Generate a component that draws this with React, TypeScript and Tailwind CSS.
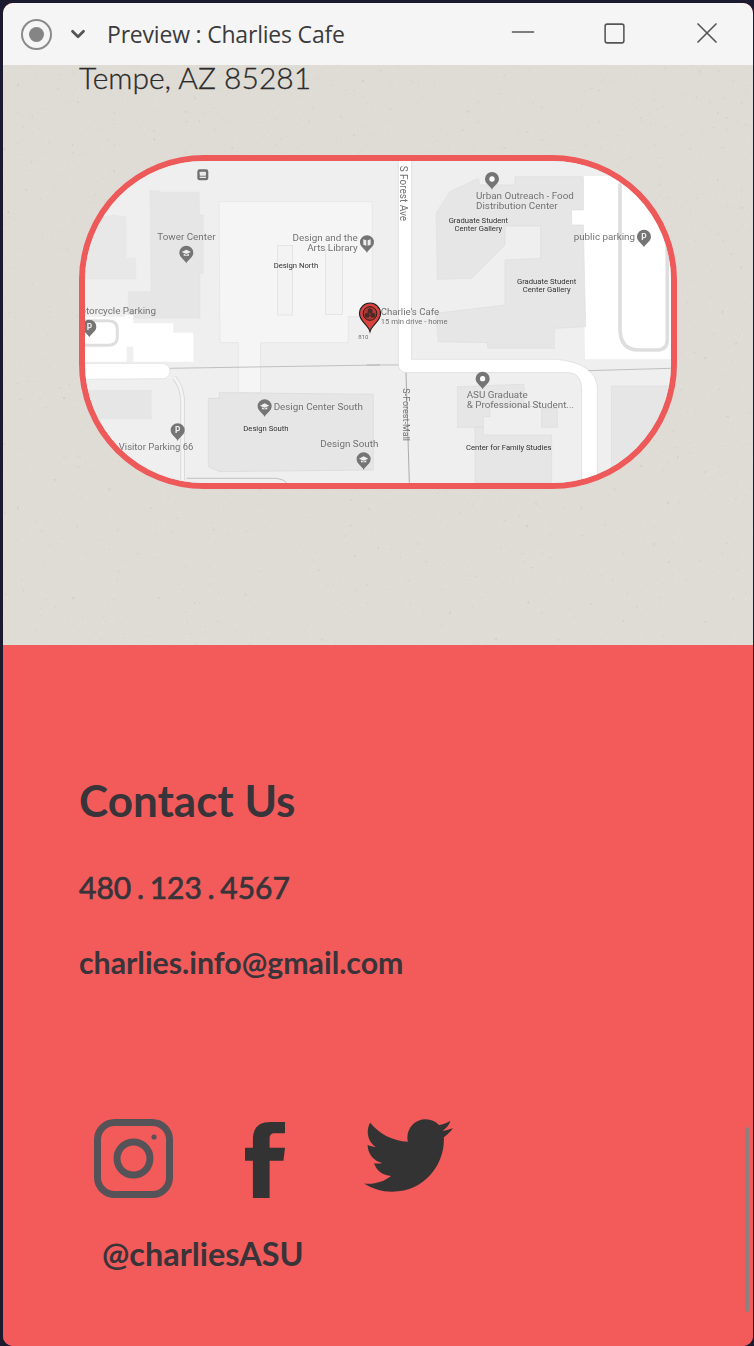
import React from "react";
import { FaTwitter } from "react-icons/fa";
import { Minus, Square, X, ChevronDown } from "lucide-react";

// map coordinates are in 3x units, so two groups share a scale
function Pin({ x, y, kind }: { x: number; y: number; kind: "dot" | "P" | "cap" | "book" }) {
  return (
    <g transform={`translate(${x} ${y})`}>
      <path d="M0 31C-4 20 -21 14 -21 -1A21 21 0 1 1 21 -1C21 14 4 20 0 31Z" fill="#757575" />
      {kind === "dot" && <circle cx="0" cy="-1" r="8" fill="#fff" />}
      {kind === "P" && (
        <text x="0" y="8" textAnchor="middle" fontSize="25" fontWeight="700" fill="#eee" fontFamily="Roboto, sans-serif">
          P
        </text>
      )}
      {kind === "cap" && <path d="M-14 -3L0 -10L14 -3L0 3ZM-8 2V8H8V2L0 6Z" fill="#eee" />}
      {kind === "book" && <path d="M-11 -10L-2 -7V9L-11 6ZM2 -7L11 -10V6L2 9Z" fill="#eee" />}
    </g>
  );
}

function Label({ x, y, size = 29.5, dark, anchor, children }: { x: number; y: number; size?: number; dark?: boolean; anchor?: "middle" | "end"; children: string }) {
  return (
    <text x={x} y={y} fontSize={size} fill={dark ? "#333" : "#737373"} textAnchor={anchor} fontFamily="Roboto, sans-serif">
      {children}
    </text>
  );
}

function CampusMap() {
  return (
    <svg viewBox="85 161 586 322" className="block w-full h-full blur-[0.4px]">
      <rect x="85" y="161" width="586" height="322" fill="#efefef" />
      {/* left half */}
      <g transform="translate(70 150) scale(0.3333)">
        <path d="M45 215L130 195L168 200V325H197V387H45Z" fill="#e8e8e8" stroke="#e0e0e0" />
        <path d="M240 122H268V127H388V195H400V370H390V505H175V425H243Z" fill="#e6e6e6" stroke="#dedede" />
        <path d="M447 155H907V500H835V578H572V728H505V578H450Z" fill="#f5f5f5" stroke="#e2e2e2" strokeWidth="2" />
        <rect x="622" y="287" width="46" height="208" fill="#f3f3f3" stroke="#dcdcdc" strokeWidth="2" />
        <rect x="767" y="300" width="50" height="193" fill="#f3f3f3" stroke="#dcdcdc" strokeWidth="2" />
        <path d="M45 500H165V495H190V520H310V548H370V635H190V590H170V635H45Z" fill="#fff" />
        <path d="M45 512H115Q142 512 142 538V562Q142 586 115 586H45" fill="#fff" stroke="#dedede" strokeWidth="9" />
        <path d="M45 640H280Q300 645 300 665Q295 690 270 686L45 688Z" fill="#fff" stroke="#dcdcdc" strokeWidth="2" />
        <path d="M300 655L930 645" stroke="#a8a8a8" strokeWidth="2" fill="none" />
        <path d="M312 682Q338 710 338 760V990" stroke="#d6d6d6" strokeWidth="14" fill="none" />
        <path d="M312 682Q338 710 338 760V990" stroke="#f4f4f4" strokeWidth="9" fill="none" />
        <rect x="45" y="720" width="200" height="88" fill="#e6e6e6" />
        <path d="M415 745H448V728L910 733V960L450 965L415 950Z" fill="#e6e6e6" stroke="#d8d8d8" strokeWidth="2" />
        <path d="M350 985H620Q640 988 650 998" stroke="#aaa" strokeWidth="2" fill="none" />
        <rect x="382" y="58" width="33" height="33" rx="7" fill="#707070" />
        <rect x="389" y="65" width="19" height="12" rx="2" fill="#e8e8e8" />
        <rect x="389" y="80" width="19" height="4" fill="#e8e8e8" />
        <Label x={262} y={270}>Tower Center</Label>
        <Pin x={349} y={309} kind="cap" />
        <Label x={863} y={272} anchor="end">Design and the</Label>
        <Label x={863} y={302} anchor="end">Arts Library</Label>
        <Pin x={891} y={278} kind="book" />
        <Label x={611} y={353} size={23} dark>Design North</Label>
        <Label x={258} y={493} anchor="end">Motorcycle Parking</Label>
        <Pin x={58} y={531} kind="P" />
        <Pin x={323} y={842} kind="P" />
        <Label x={370} y={900} anchor="end" size={28.5}>Visitor Parking 66</Label>
        <Pin x={584} y={770} kind="cap" />
        <Label x={611} y={780}>Design Center South</Label>
        <Label x={520} y={843} size={23} dark>Design South</Label>
        <Label x={925} y={891} anchor="end">Design South</Label>
        <Pin x={881} y={929} kind="cap" />
        <Label x={865} y={566} size={18}>810</Label>
      </g>
      {/* right half */}
      <g transform="translate(370 150) scale(0.3333)">
        <path d="M640 78H930V628H645L640 225H605V180H640Z" fill="#fff" />
        <path d="M750 100V535Q750 600 805 600H860Q892 600 892 570V280" fill="none" stroke="#dedede" strokeWidth="11" />
        <path d="M85 30V640Q85 668 112 668H600Q635 672 635 720V998H682V710Q675 640 560 628H125V30Z" fill="#fff" stroke="#d8d8d8" strokeWidth="2" />
        <path d="M198 190L240 125L325 85L330 105H435V80H640V180H605V225H640L647 530L553 535V595H353V578L205 575L198 490L405 465V330L512 325V228H405V285L305 385L202 388L200 250Z" fill="#e6e6e6" stroke="#dedede" strokeWidth="2" />
        <path d="M262 710L462 703V770H515V775H562V832H515V770H360V800H340V832H262Z" fill="#e6e6e6" stroke="#dddddd" strokeWidth="2" />
        <path d="M315 832H340V855H545V998H315Z" fill="#e6e6e6" stroke="#dddddd" strokeWidth="2" />
        <rect x="725" y="708" width="180" height="290" fill="#e6e6e6" stroke="#dddddd" strokeWidth="2" />
        <path d="M108 668L118 998" stroke="#888" strokeWidth="2" fill="none" />
        <path d="M655 662L905 655" stroke="#a8a8a8" strokeWidth="2" fill="none" />
        <path d="M-10 645H85" stroke="#a8a8a8" strokeWidth="2" fill="none" />
        <text transform="translate(90 47) rotate(90)" fontSize="30" fill="#737373" fontFamily="Roboto, sans-serif">S Forest Ave</text>
        <text transform="translate(100 715) rotate(90)" fontSize="27" fill="#737373" fontFamily="Roboto, sans-serif">S-Forest-Mall</text>
        <Pin x={366} y={88} kind="dot" />
        <Label x={318} y={146}>Urban Outreach - Food</Label>
        <Label x={318} y={176}>Distribution Center</Label>
        <Label x={325} y={218} size={23} dark anchor="middle">Graduate Student</Label>
        <Label x={325} y={242} size={23} dark anchor="middle">Center Gallery</Label>
        <Label x={530} y={402} size={23} dark anchor="middle">Graduate Student</Label>
        <Label x={530} y={426} size={23} dark anchor="middle">Center Gallery</Label>
        <Label x={611} y={270}>public parking</Label>
        <Pin x={822} y={261} kind="P" />
        <Label x={32} y={496} size={29}>Charlie's Cafe</Label>
        <Label x={32} y={523} size={23}>15 min drive - home</Label>
        <Pin x={338} y={687} kind="dot" />
        <Label x={290} y={744}>ASU Graduate</Label>
        <Label x={290} y={774}>&amp; Professional Student...</Label>
        <Label x={288} y={899} size={23} dark>Center for Family Studies</Label>
      </g>
      {/* cafe marker */}
      <g transform="translate(370 316.5)">
        <path d="M0 15C-2 8 -10.5 5 -10.5 -3A10.5 10.5 0 1 1 10.5 -3C10.5 5 2 8 0 15Z" fill="#d9433f" stroke="#222" strokeWidth="1.2" />
        <circle cx="0" cy="-3" r="6.8" fill="#b23a36" stroke="#2a1a18" strokeWidth="1" />
        <circle cx="0" cy="-5.6" r="2.5" fill="#4a2a25" />
        <circle cx="-2.8" cy="-1.2" r="2.5" fill="#4a2a25" />
        <circle cx="2.8" cy="-1.2" r="2.5" fill="#4a2a25" />
      </g>
    </svg>
  );
}

export default function App() {
  return (
    <div className="w-[754px] h-[1346px] bg-[#1c1a2e] pl-[3px] pt-[3px] pr-[1px] font-['Lato',sans-serif] overflow-hidden">
      <div className="w-full h-[1343px] rounded-[10px] overflow-hidden flex flex-col relative bg-[#f35b5b]">
        {/* title bar */}
        <div className="h-[62px] shrink-0 bg-[#f5f5f6] flex items-center text-[#3c3c3c]">
          <div className="ml-[18px] w-[31px] h-[31px] rounded-full border-2 border-[#8a8a8a] flex items-center justify-center">
            <div className="w-[15px] h-[15px] rounded-full bg-[#858585]" />
          </div>
          <ChevronDown className="ml-[15px] w-[22px] h-[22px]" strokeWidth={3} color="#555" />
          <span className="ml-[18px] text-[23px] font-['Open_Sans',sans-serif] tracking-[-0.2px]">Preview : Charlies Cafe</span>
          <Minus className="absolute left-[502px] top-[11px] w-[36px] h-[36px]" strokeWidth={1.1} color="#555" />
          <Square className="absolute left-[599px] top-[18px] w-[25px] h-[25px]" strokeWidth={1.5} color="#555" />
          <X className="absolute left-[686px] top-[12px] w-[36px] h-[36px]" strokeWidth={1.1} color="#555" />
        </div>

        {/* paper section */}
        <div className="h-[580px] shrink-0 bg-[#e0ddd7] overflow-hidden relative pl-[76px]">
          <svg className="absolute inset-0 w-full h-full" aria-hidden="true">
            <filter id="paper">
              <feTurbulence type="fractalNoise" baseFrequency="0.5" numOctaves="3" seed="4" />
              <feColorMatrix values="0 0 0 0 0.55  0 0 0 0 0.53  0 0 0 0 0.48  0 0 0 0.5 -0.18" />
            </filter>
            <filter id="specks">
              <feTurbulence type="fractalNoise" baseFrequency="0.22" numOctaves="2" seed="9" />
              <feColorMatrix values="0 0 0 0 0.5  0 0 0 0 0.48  0 0 0 0 0.44  0 0 0 7 -5.2" />
            </filter>
            <rect width="100%" height="100%" filter="url(#paper)" opacity="0.3" />
            <rect width="100%" height="100%" filter="url(#specks)" opacity="0.35" />
          </svg>
          <p className="relative text-[30px] leading-[24px] font-light text-[#2b2b2b] [-webkit-text-stroke:0.3px_#2b2b2b]">Tempe, AZ 85281</p>
          <div className="relative mt-[66px] w-[598px] h-[334px] rounded-[125px] border-[6px] border-[#ee5a5a] overflow-hidden">
            <CampusMap />
          </div>
        </div>

        {/* contact section */}
        <div className="flex-1 bg-[#f35b5b] pl-[76px] text-[#38343a] relative">
          <h2 className="mt-[129px] text-[44px] leading-[52px] font-bold">Contact Us</h2>
          <p className="mt-[41px] text-[30px] leading-[40px] font-normal [word-spacing:-2px] [-webkit-text-stroke:0.7px_#38343a]">480 . 123 . 4567</p>
          <p className="mt-[35px] text-[30.3px] leading-[40px] font-bold">charlies.info@gmail.com</p>

          <div className="mt-[137px] flex items-start">
            <svg viewBox="0 0 80 80" className="ml-[15px] w-[80px] h-[80px]">
              <rect x="3.5" y="3.5" width="72" height="72" rx="17" fill="none" stroke="#555357" strokeWidth="7" />
              <circle cx="39.5" cy="39.5" r="16.5" fill="none" stroke="#555357" strokeWidth="7" />
              <circle cx="60" cy="18" r="2.6" fill="#555357" />
            </svg>
            <svg viewBox="0 0 39 74" className="ml-[71px] mt-[3px] w-[40px] h-[76px]">
              <path d="M7.7 74V37.7H0V25H7.7V17C7.7 5 14 0 25 0H39V11H29C25.5 11 24 13 24 16V25H39L37.5 37.7H24V74Z" fill="#333333" />
            </svg>
            <FaTwitter className="ml-[79px] -mt-[8px] w-[89px] h-[89px] text-[#333333]" />
          </div>
          <p className="mt-[34px] ml-[23px] text-[32.4px] leading-[40px] font-bold">@charliesASU</p>

          <div className="absolute left-[742px] top-[482px] w-[4px] h-[185px] rounded-full bg-[#8f8080]" />
        </div>
      </div>
    </div>
  );
}
